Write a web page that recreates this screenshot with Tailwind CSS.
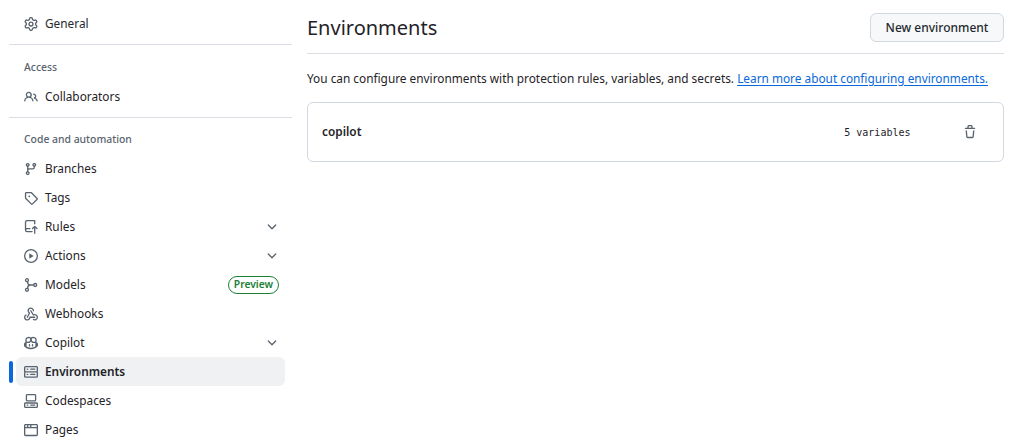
<!DOCTYPE html>
<html lang="en"><head><meta charset="utf-8"><title>Environments</title>
<script src="https://cdn.jsdelivr.net/npm/@tailwindcss/browser@4"></script></head>
<body class="bg-white">
<div class="flex h-[440px] w-[1024px] overflow-hidden bg-white font-['Noto_Sans',sans-serif] text-[11.84px] text-[#1f2328]">
<aside class="ml-[9px] w-[283px] shrink-0 pt-[9px]">
<ul class="px-[7px]">
<li class="flex h-[29px] items-center gap-[7.5px] rounded-md px-[7.5px] text-[#25292e]"><svg class="h-[14px] w-[14px] fill-[#59636e]" viewBox="0 0 16 16"><path d="M8 0a8.2 8.2 0 0 1 .701.031C9.444.095 9.99.645 10.16 1.29l.288 1.107c.018.066.079.158.212.224.231.114.454.243.668.386.123.082.233.09.299.071l1.103-.303c.644-.176 1.392.021 1.82.63.27.385.506.792.704 1.218.315.675.111 1.422-.364 1.891l-.814.806c-.049.048-.098.147-.088.294.016.257.016.515 0 .772-.01.147.038.246.088.294l.814.806c.475.469.679 1.216.364 1.891a7.977 7.977 0 0 1-.704 1.217c-.428.61-1.176.807-1.82.63l-1.102-.302c-.067-.019-.177-.011-.3.071a5.909 5.909 0 0 1-.668.386c-.133.066-.194.158-.211.224l-.29 1.106c-.168.646-.715 1.196-1.458 1.26a8.006 8.006 0 0 1-1.402 0c-.743-.064-1.289-.614-1.458-1.26l-.289-1.106c-.018-.066-.079-.158-.212-.224a5.738 5.738 0 0 1-.668-.386c-.123-.082-.233-.09-.299-.071l-1.103.303c-.644.176-1.392-.021-1.82-.63a8.12 8.12 0 0 1-.704-1.218c-.315-.675-.111-1.422.363-1.891l.815-.806c.05-.048.098-.147.088-.294a6.214 6.214 0 0 1 0-.772c.01-.147-.038-.246-.088-.294l-.815-.806C.635 6.045.431 5.298.746 4.623a7.92 7.92 0 0 1 .704-1.217c.428-.61 1.176-.807 1.82-.63l1.102.302c.067.019.177.011.3-.071.214-.143.437-.272.668-.386.133-.066.194-.158.211-.224l.29-1.106C6.009.645 6.556.095 7.299.03 7.53.01 7.764 0 8 0Zm-.571 1.525c-.036.003-.108.036-.137.146l-.289 1.105c-.147.561-.549.967-.998 1.189-.173.086-.34.183-.5.29-.417.278-.97.423-1.529.27l-1.103-.303c-.109-.03-.175.016-.195.045-.22.312-.412.644-.573.99-.014.031-.021.11.059.19l.815.806c.411.406.562.957.53 1.456a4.709 4.709 0 0 0 0 .582c.032.499-.119 1.05-.53 1.456l-.815.806c-.081.08-.073.159-.059.19.162.346.353.677.573.989.02.03.085.076.195.046l1.102-.303c.56-.153 1.113-.008 1.53.27.161.107.328.204.501.29.447.222.85.629.997 1.189l.289 1.105c.029.109.101.143.137.146a6.6 6.6 0 0 0 1.142 0c.036-.003.108-.036.137-.146l.289-1.105c.147-.561.549-.967.998-1.189.173-.086.34-.183.5-.29.417-.278.97-.423 1.529-.27l1.103.303c.109.029.175-.016.195-.045.22-.313.411-.644.573-.99.014-.031.021-.11-.059-.19l-.815-.806c-.411-.406-.562-.957-.53-1.456a4.709 4.709 0 0 0 0-.582c-.032-.499.119-1.05.53-1.456l.815-.806c.081-.08.073-.159.059-.19a6.464 6.464 0 0 0-.573-.989c-.02-.03-.085-.076-.195-.046l-1.102.303c-.56.153-1.113.008-1.53-.27a4.44 4.44 0 0 0-.501-.29c-.447-.222-.85-.629-.997-1.189l-.289-1.105c-.029-.11-.101-.143-.137-.146a6.6 6.6 0 0 0-1.142 0ZM11 8a3 3 0 1 1-6 0 3 3 0 0 1 6 0ZM9.5 8a1.5 1.5 0 1 0-3.001.001A1.5 1.5 0 0 0 9.5 8Z"/></svg><span>General</span></li>
</ul>
<div class="mt-[6px] h-px bg-[#d8dee4]"></div>
<h2 class="mt-[15px] px-[15px] text-[10.4px] leading-[14px] font-medium text-[#59636e]">Access</h2>
<ul class="mt-[8px] px-[7px]">
<li class="flex h-[29px] items-center gap-[7.5px] rounded-md px-[7.5px]"><svg class="h-[14px] w-[14px] fill-[#59636e]" viewBox="0 0 16 16"><path d="M2 5.5a3.5 3.5 0 1 1 5.898 2.549 5.508 5.508 0 0 1 3.034 4.084.75.75 0 1 1-1.482.235 4 4 0 0 0-7.9 0 .75.75 0 0 1-1.482-.236A5.507 5.507 0 0 1 3.102 8.05 3.493 3.493 0 0 1 2 5.5ZM11 4a3.001 3.001 0 0 1 2.22 5.018 5.01 5.01 0 0 1 2.56 3.012.749.749 0 0 1-.885.954.752.752 0 0 1-.549-.514 3.507 3.507 0 0 0-2.522-2.372.75.75 0 0 1-.574-.73v-.352a.75.75 0 0 1 .416-.672A1.5 1.5 0 0 0 11 5.5.75.75 0 0 1 11 4Zm-5.5-.5a2 2 0 1 0-.001 3.999A2 2 0 0 0 5.5 3.5Z"/></svg><span>Collaborators</span></li>
</ul>
<div class="mt-[6px] h-px bg-[#d8dee4]"></div>
<h2 class="mt-[14px] px-[15px] text-[10.4px] leading-[14px] font-medium text-[#59636e]">Code and automation</h2>
<ul class="mt-[8px] px-[7px]">
<li class="flex h-[29px] items-center gap-[7.5px] px-[7.5px]"><svg class="h-[14px] w-[14px] fill-[#59636e]" viewBox="0 0 16 16"><path d="M9.5 3.25a2.25 2.25 0 1 1 3 2.122V6A2.5 2.5 0 0 1 10 8.5H6a1 1 0 0 0-1 1v1.128a2.251 2.251 0 1 1-1.5 0V5.372a2.25 2.25 0 1 1 1.5 0v1.836A2.493 2.493 0 0 1 6 7h4a1 1 0 0 0 1-1v-.628A2.25 2.25 0 0 1 9.5 3.25Zm-6 0a.75.75 0 1 0 1.5 0 .75.75 0 0 0-1.5 0Zm8.25-.75a.75.75 0 1 0 0 1.5.75.75 0 0 0 0-1.5ZM4.25 12a.75.75 0 1 0 0 1.5.75.75 0 0 0 0-1.5Z"/></svg><span>Branches</span></li>
<li class="flex h-[29px] items-center gap-[7.5px] px-[7.5px]"><svg class="h-[14px] w-[14px] fill-[#59636e]" viewBox="0 0 16 16"><path d="M1 7.775V2.75C1 1.784 1.784 1 2.75 1h5.025c.464 0 .91.184 1.238.513l6.25 6.25a1.75 1.75 0 0 1 0 2.474l-5.026 5.026a1.75 1.75 0 0 1-2.474 0l-6.25-6.25A1.75 1.75 0 0 1 1 7.775Zm1.5 0c0 .066.026.13.073.177l6.25 6.25a.25.25 0 0 0 .354 0l5.025-5.025a.25.25 0 0 0 0-.354l-6.25-6.25a.25.25 0 0 0-.177-.073H2.75a.25.25 0 0 0-.25.25ZM6 5a1 1 0 1 1 0 2 1 1 0 0 1 0-2Z"/></svg><span>Tags</span></li>
<li class="flex h-[29px] items-center gap-[7.5px] px-[7.5px]"><svg class="h-[14px] w-[14px] fill-[#59636e]" viewBox="0 0 16 16"><path d="M1 2.5A2.5 2.5 0 0 1 3.5 0h8.75a.75.75 0 0 1 .75.75v3.5a.75.75 0 0 1-1.5 0V1.5h-8a1 1 0 0 0-1 1v6.708A2.486 2.486 0 0 1 3.5 9h3.25a.75.75 0 0 1 0 1.5H3.5a1 1 0 0 0 0 2h5.75a.75.75 0 0 1 0 1.5H3.5A2.5 2.5 0 0 1 1 11.5Zm13.23 7.79h-.001l-1.224-1.224v6.184a.75.75 0 0 1-1.5 0V9.066L10.28 10.29a.75.75 0 0 1-1.06-1.061l2.505-2.504a.75.75 0 0 1 1.06 0L15.29 9.23a.751.751 0 0 1-.018 1.042.751.751 0 0 1-1.042.018Z"/></svg><span>Rules</span><svg class="ml-auto mr-[-1px] h-[14px] w-[14px] fill-[#59636e]" viewBox="0 0 16 16"><path d="M12.78 5.22a.749.749 0 0 1 0 1.06l-4.25 4.25a.749.749 0 0 1-1.06 0L3.22 6.28a.749.749 0 1 1 1.06-1.06L8 8.939l3.72-3.719a.749.749 0 0 1 1.06 0Z"/></svg></li>
<li class="flex h-[29px] items-center gap-[7.5px] px-[7.5px]"><svg class="h-[14px] w-[14px] fill-[#59636e]" viewBox="0 0 16 16"><path d="M8 0a8 8 0 1 1 0 16A8 8 0 0 1 8 0ZM1.5 8a6.5 6.5 0 1 0 13 0 6.5 6.5 0 0 0-13 0Zm4.879-2.773 4.264 2.559a.25.25 0 0 1 0 .428l-4.264 2.559A.25.25 0 0 1 6 10.559V5.442a.25.25 0 0 1 .379-.215Z"/></svg><span>Actions</span><svg class="ml-auto mr-[-1px] h-[14px] w-[14px] fill-[#59636e]" viewBox="0 0 16 16"><path d="M12.78 5.22a.749.749 0 0 1 0 1.06l-4.25 4.25a.749.749 0 0 1-1.06 0L3.22 6.28a.749.749 0 1 1 1.06-1.06L8 8.939l3.72-3.719a.749.749 0 0 1 1.06 0Z"/></svg></li>
<li class="flex h-[29px] items-center gap-[7.5px] px-[7.5px]"><svg class="h-[14px] w-[14px] fill-none stroke-[#59636e] stroke-[1.5]" viewBox="0 0 16 16"><circle cx="3.4" cy="2.5" r="1.7"/><circle cx="3.4" cy="13.5" r="1.7"/><circle cx="12.8" cy="8" r="1.7"/><path d="M3.9 4.2c.3 2 1 3.8 3 3.8h4.2M3.9 11.8c.3-2 1-3.8 3-3.8"/></svg><span>Models</span><span class="ml-auto mr-[-1.5px] flex h-[18px] w-[51px] items-center justify-center rounded-full border border-[#1a7f37] text-[10.3px] font-semibold text-[#1a7f37]">Preview</span></li>
<li class="flex h-[29px] items-center gap-[7.5px] px-[7.5px]"><svg class="h-[14px] w-[14px] fill-[#59636e]" viewBox="0 0 16 16"><path d="M5.5 4.25a2.25 2.25 0 0 1 4.5 0 .75.75 0 0 0 1.5 0 3.75 3.75 0 1 0-6.14 2.889l-2.272 4.258a.75.75 0 0 0 1.324.706L7 7.25a.75.75 0 0 0-.309-1.015A2.25 2.25 0 0 1 5.5 4.25Z"/><path d="M7.364 3.607a.75.75 0 0 1 1.03.257l2.608 4.349a3.75 3.75 0 1 1-.628 6.785.75.75 0 0 1 .752-1.299 2.25 2.25 0 1 0-.033-3.88.75.75 0 0 1-1.03-.256L7.107 4.636a.75.75 0 0 1 .257-1.03Z"/><path d="M2.9 8.776A.75.75 0 0 1 2.625 9.8 2.25 2.25 0 1 0 6 11.75a.75.75 0 0 1 .75-.751h5.5a.75.75 0 0 1 0 1.5H7.425a3.751 3.751 0 1 1-5.55-3.998.75.75 0 0 1 1.024.274Z"/></svg><span>Webhooks</span></li>
<li class="flex h-[29px] items-center gap-[7.5px] px-[7.5px]"><svg class="h-[14px] w-[14px] fill-[#59636e]" viewBox="0 0 16 16"><path d="M7.998 15.035c-4.562 0-7.873-2.914-7.998-3.749V9.338c.085-.628.677-1.686 1.588-2.065.013-.07.024-.143.036-.218.029-.183.06-.384.126-.612-.201-.508-.254-1.084-.254-1.656 0-.87.128-1.769.693-2.484.579-.733 1.494-1.124 2.724-1.261 1.206-.134 2.262.034 2.944.765.05.053.096.108.139.165.044-.057.094-.112.143-.165.682-.731 1.738-.899 2.944-.765 1.23.137 2.145.528 2.724 1.261.566.715.693 1.614.693 2.484 0 .572-.053 1.148-.254 1.656.066.228.098.429.126.612.012.076.024.148.037.218.924.385 1.522 1.471 1.591 2.095v1.872c0 .766-3.351 3.795-8.002 3.795Zm0-1.485c2.28 0 4.584-1.11 5.002-1.433V7.862l-.023-.116c-.49.21-1.075.291-1.727.291-1.146 0-2.059-.327-2.71-.991A3.222 3.222 0 0 1 8 6.303a3.24 3.24 0 0 1-.544.743c-.65.664-1.563.991-2.71.991-.652 0-1.236-.081-1.727-.291l-.023.116v4.255c.419.323 2.722 1.433 5.002 1.433ZM6.762 2.83c-.193-.206-.637-.413-1.682-.297-1.019.113-1.479.404-1.713.7-.247.312-.369.789-.369 1.554 0 .793.129 1.171.308 1.371.162.181.519.379 1.442.379.853 0 1.339-.235 1.638-.54.315-.322.527-.827.617-1.553.117-.935-.037-1.395-.241-1.614Zm4.155-.297c-1.044-.116-1.488.091-1.681.297-.204.219-.359.679-.242 1.614.091.726.303 1.231.618 1.553.299.305.784.54 1.638.54.922 0 1.28-.198 1.442-.379.179-.2.308-.578.308-1.371 0-.765-.123-1.242-.37-1.554-.233-.296-.693-.587-1.713-.7Z"/><path d="M6.25 9.037a.75.75 0 0 1 .75.75v1.501a.75.75 0 0 1-1.5 0V9.787a.75.75 0 0 1 .75-.75Zm4.25.75v1.501a.75.75 0 0 1-1.5 0V9.787a.75.75 0 0 1 1.5 0Z"/></svg><span>Copilot</span><svg class="ml-auto mr-[-1px] h-[14px] w-[14px] fill-[#59636e]" viewBox="0 0 16 16"><path d="M12.78 5.22a.749.749 0 0 1 0 1.06l-4.25 4.25a.749.749 0 0 1-1.06 0L3.22 6.28a.749.749 0 1 1 1.06-1.06L8 8.939l3.72-3.719a.749.749 0 0 1 1.06 0Z"/></svg></li>
<li class="relative flex h-[29px] items-center gap-[7.5px] rounded-md bg-[#eff1f3] px-[7.5px] font-semibold"><span class="absolute top-[4px] left-[-7px] h-[22px] w-[4px] rounded-md bg-[#0969da]"></span><svg class="h-[14px] w-[14px] fill-[#59636e]" viewBox="0 0 16 16"><path d="M1.75 1h12.5c.966 0 1.75.784 1.75 1.75v4c0 .372-.116.717-.314 1 .198.283.314.628.314 1v4a1.75 1.75 0 0 1-1.75 1.75H1.75A1.75 1.75 0 0 1 0 13.75v-4c0-.372.116-.717.314-1a1.739 1.739 0 0 1-.314-1v-4C0 1.784.784 1 1.75 1ZM1.5 2.75v4c0 .138.112.25.25.25h12.5a.25.25 0 0 0 .25-.25v-4a.25.25 0 0 0-.25-.25H1.75a.25.25 0 0 0-.25.25Zm.25 5.75a.25.25 0 0 0-.25.25v4c0 .138.112.25.25.25h12.5a.25.25 0 0 0 .25-.25v-4a.25.25 0 0 0-.25-.25ZM7 4.75A.75.75 0 0 1 7.75 4h4.5a.75.75 0 0 1 0 1.5h-4.5A.75.75 0 0 1 7 4.75ZM7.75 10h4.5a.75.75 0 0 1 0 1.5h-4.5a.75.75 0 0 1 0-1.5ZM3 4.75A.75.75 0 0 1 3.75 4h.5a.75.75 0 0 1 0 1.5h-.5A.75.75 0 0 1 3 4.75ZM3.75 10h.5a.75.75 0 0 1 0 1.5h-.5a.75.75 0 0 1 0-1.5Z"/></svg><span>Environments</span></li>
<li class="flex h-[29px] items-center gap-[7.5px] px-[7.5px]"><svg class="h-[14px] w-[14px] fill-[#59636e]" viewBox="0 0 16 16"><path d="M0 11.25c0-.966.784-1.75 1.75-1.75h12.5c.966 0 1.75.784 1.75 1.75v3A1.75 1.75 0 0 1 14.25 16H1.75A1.75 1.75 0 0 1 0 14.25Zm2-9.5C2 .784 2.784 0 3.75 0h8.5C13.216 0 14 .784 14 1.75v5a1.75 1.75 0 0 1-1.75 1.75h-8.5A1.75 1.75 0 0 1 2 6.75Zm1.75-.25a.25.25 0 0 0-.25.25v5c0 .138.112.25.25.25h8.5a.25.25 0 0 0 .25-.25v-5a.25.25 0 0 0-.25-.25Zm-2 9.5a.25.25 0 0 0-.25.25v3c0 .138.112.25.25.25h12.5a.25.25 0 0 0 .25-.25v-3a.25.25 0 0 0-.25-.25Z"/><path d="M7 12.75a.75.75 0 0 1 .75-.75h4.5a.75.75 0 0 1 0 1.5h-4.5a.75.75 0 0 1-.75-.75Zm-4 0a.75.75 0 0 1 .75-.75h.5a.75.75 0 0 1 0 1.5h-.5a.75.75 0 0 1-.75-.75Z"/></svg><span>Codespaces</span></li>
<li class="flex h-[29px] items-center gap-[7.5px] px-[7.5px]"><svg class="h-[14px] w-[14px] fill-[#59636e]" viewBox="0 0 16 16"><path d="M0 2.75C0 1.784.784 1 1.75 1h12.5c.966 0 1.75.784 1.75 1.75v10.5A1.75 1.75 0 0 1 14.25 15H1.75A1.75 1.75 0 0 1 0 13.25ZM14.5 6h-13v7.25c0 .138.112.25.25.25h12.5a.25.25 0 0 0 .25-.25Zm-6-3.5v2h6V2.75a.25.25 0 0 0-.25-.25ZM5 2.5v2h2v-2Zm-3.25 0a.25.25 0 0 0-.25.25V4.5h2v-2Z"/></svg><span>Pages</span></li>
</ul>
</aside>
<main class="ml-[15px] w-[697px] shrink-0">
<div class="flex h-[54px] items-center justify-between border-b border-[#d8dee4] pt-[2px]">
<h1 class="text-[20px] font-normal text-[#1f2328]">Environments</h1>
<button class="flex h-[29px] w-[134px] items-center justify-center rounded-md border border-[#d1d9e0] bg-[#f6f8fa] text-[12px] font-medium text-[#25292e]">New environment</button>
</div>
<p class="mt-[14px] leading-[20px] text-[#1f2328]">You can configure environments with protection rules, variables, and secrets. <a class="text-[#0969da] underline underline-offset-2">Learn more about configuring environments.</a></p>
<div class="mt-[14px] flex h-[60px] items-center rounded-md border border-[#d1d9e0] pr-[26px] pl-[14px]">
<span class="font-semibold">copilot</span>
<span class="ml-auto font-['DejaVu_Sans_Mono',monospace] text-[10px]">5 variables</span>
<svg class="ml-[52.5px] h-[14px] w-[14px] fill-[#59636e]" viewBox="0 0 16 16"><path d="M11 1.75V3h2.25a.75.75 0 0 1 0 1.5H2.75a.75.75 0 0 1 0-1.5H5V1.75C5 .784 5.784 0 6.75 0h2.5C10.216 0 11 .784 11 1.75ZM4.496 6.675l.66 6.6a.25.25 0 0 0 .249.225h5.19a.25.25 0 0 0 .249-.225l.66-6.6a.75.75 0 0 1 1.492.149l-.66 6.6A1.748 1.748 0 0 1 10.595 15h-5.19a1.75 1.75 0 0 1-1.741-1.575l-.66-6.6a.75.75 0 1 1 1.492-.15ZM6.5 1.75V3h3V1.75a.25.25 0 0 0-.25-.25h-2.5a.25.25 0 0 0-.25.25Z"/></svg>
</div>
</main>
</div>
</body></html>
